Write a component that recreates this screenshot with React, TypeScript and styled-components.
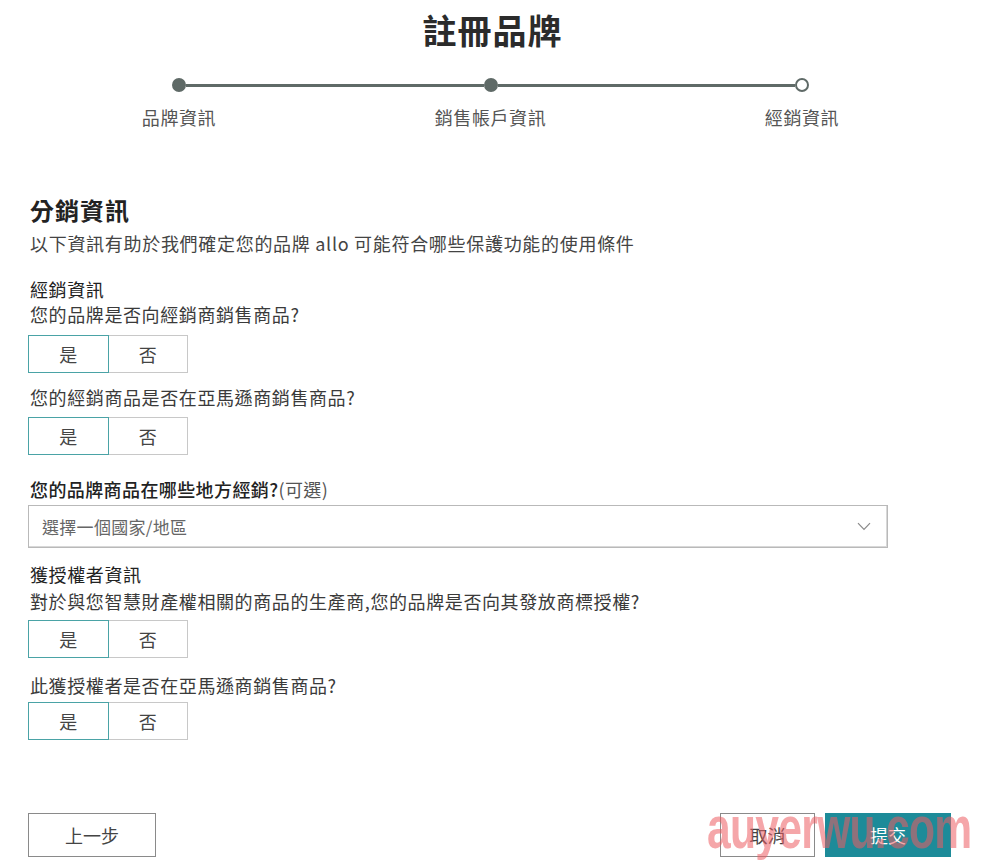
import React, { useState } from "react";
import styled, { createGlobalStyle } from "styled-components";

const GlobalStyle = createGlobalStyle`
  html, body { margin: 0; padding: 0; background: #fff; }
  body {
    font-family: "Noto Sans CJK TC", "Noto Sans", sans-serif;
    color: #333;
    -webkit-font-smoothing: antialiased;
  }
  * { box-sizing: border-box; }
`;

const Page = styled.div`
  position: relative;
  width: 985px;
  height: 862px;
  overflow: hidden;
  padding-top: 8px;
`;

const Title = styled.h1`
  margin: 0;
  text-align: center;
  font-size: 34px;
  line-height: 44px;
  font-weight: 700;
  color: #2b2b2b;
  letter-spacing: 1px;
`;

const Stepper = styled.div`
  display: flex;
  margin: 26px 0 0 172px;
  width: 637px;
`;

const Step = styled.div`
  width: 14px;
  display: flex;
  flex-direction: column;
  align-items: center;
`;

const Dot = styled.div<{ $done: boolean }>`
  width: 14px;
  height: 14px;
  border-radius: 50%;
  background: ${(p) => (p.$done ? "#5f6a67" : "#fff")};
  border: 2px solid #5f6a67;
  flex: none;
`;

const StepLabel = styled.div`
  margin-top: 13px;
  white-space: nowrap;
  font-size: 18px;
  letter-spacing: 0.6px;
  line-height: 24px;
  color: #555;
`;

const Connector = styled.div`
  flex: 1;
  height: 3px;
  margin-top: 5.5px;
  background: #5f6a67;
`;

const Form = styled.div`
  margin: 66px 0 0 28px;
  width: 860px;
  display: flex;
  flex-direction: column;
`;

const SectionTitle = styled.h2`
  margin: 0 0 0 2px;
  font-size: 24px;
  letter-spacing: 1px;
  line-height: 30px;
  font-weight: 700;
  color: #222;
`;

const Subtitle = styled.p`
  margin: 6px 0 0 2px;
  font-size: 18px;
  letter-spacing: 0.7px;
  line-height: 24px;
  color: #444;
`;

const GroupTitle = styled.div<{ $mt: number }>`
  margin: ${(p) => p.$mt}px 0 0 2px;
  font-size: 18px;
  letter-spacing: 0.6px;
  line-height: 24px;
  color: #222;
`;

const Question = styled.div<{ $mt: number }>`
  margin: ${(p) => p.$mt}px 0 0 2px;
  font-size: 18px;
  letter-spacing: 0.6px;
  line-height: 24px;
  color: #3a3a3a;
`;

const FieldLabel = styled.div`
  margin: 22px 0 0 2px;
  font-size: 18px;
  letter-spacing: 0.4px;
  line-height: 24px;
  font-weight: 500;
  color: #222;
`;

const Optional = styled.span`
  font-weight: 400;
  color: #555;
`;

const Toggle = styled.div<{ $mt: number }>`
  margin-top: ${(p) => p.$mt}px;
  display: flex;
  width: 160px;
  height: 38px;
`;

const ToggleBtn = styled.button<{ $active: boolean; $side: "l" | "r" }>`
  width: 81px;
  height: 38px;
  padding: 0;
  background: #fff;
  font-family: inherit;
  font-size: 18px;
  color: #444;
  cursor: pointer;
  border: 1px solid ${(p) => (p.$active ? "#4aa3a6" : "#c8c8c8")};
  ${(p) => (p.$active ? "border-width: 1.5px;" : "")}
  ${(p) => (p.$side === "r" ? "margin-left: -1px;" : "")}
  position: relative;
  z-index: ${(p) => (p.$active ? 1 : 0)};
`;

const Select = styled.div`
  margin-top: 4px;
  height: 43px;
  border: 1px solid #b9b9b9;
  box-shadow: inset -1px -1px 0 #d8d8d8;
  display: flex;
  align-items: center;
  justify-content: space-between;
  padding: 0 16px 0 13px;
  font-size: 17px;
  letter-spacing: 0.3px;
  color: #666;
`;

const Footer = styled.div`
  margin: 73px 34px 0 28px;
  display: flex;
  justify-content: space-between;
  align-items: center;
`;

const Actions = styled.div`
  display: flex;
  gap: 10px;
`;

const Button = styled.button<{ $w: number; $primary?: boolean }>`
  width: ${(p) => p.$w}px;
  height: 44px;
  font-family: inherit;
  font-size: 18px;
  background: ${(p) => (p.$primary ? "#1d8b99" : "#fff")};
  color: ${(p) => (p.$primary ? "#fff" : "#444")};
  border: 1px solid ${(p) => (p.$primary ? "#1d8b99" : "#8a8a8a")};
  cursor: pointer;
`;

const Watermark = styled.div`
  position: absolute;
  left: 707px;
  top: 793px;
  font-family: "Liberation Sans", Arial, sans-serif;
  font-weight: 700;
  font-size: 60px;
  line-height: 70px;
  color: rgba(236, 92, 98, 0.55);
  transform: scaleX(0.71);
  transform-origin: left top;
  pointer-events: none;
  letter-spacing: -1px;
  white-space: nowrap;
`;

const Chevron = () => (
  <svg width="14" height="9" viewBox="0 0 14 9" fill="none">
    <path d="M1 1.2 L7 7.5 L13 1.2" stroke="#8a8a8a" strokeWidth="1.2" />
  </svg>
);

type YN = "yes" | "no";

const YesNo: React.FC<{ mt: number; value: YN; onChange: (v: YN) => void }> = ({
  mt,
  value,
  onChange,
}) => (
  <Toggle $mt={mt}>
    <ToggleBtn $side="l" $active={value === "yes"} onClick={() => onChange("yes")}>
      是
    </ToggleBtn>
    <ToggleBtn $side="r" $active={value === "no"} onClick={() => onChange("no")}>
      否
    </ToggleBtn>
  </Toggle>
);

const steps = [
  { label: "品牌資訊", done: true },
  { label: "銷售帳戶資訊", done: true },
  { label: "經銷資訊", done: false },
];

export default function App() {
  const [a, setA] = useState<YN>("yes");
  const [b, setB] = useState<YN>("yes");
  const [c, setC] = useState<YN>("yes");
  const [d, setD] = useState<YN>("yes");

  return (
    <Page>
      <GlobalStyle />
      <Title>註冊品牌</Title>
      <Stepper>
        {steps.map((s, i) => (
          <React.Fragment key={s.label}>
            {i > 0 && <Connector />}
            <Step>
              <Dot $done={s.done} />
              <StepLabel>{s.label}</StepLabel>
            </Step>
          </React.Fragment>
        ))}
      </Stepper>

      <Form>
        <SectionTitle>分銷資訊</SectionTitle>
        <Subtitle>以下資訊有助於我們確定您的品牌 allo 可能符合哪些保護功能的使用條件</Subtitle>

        <GroupTitle $mt={22}>經銷資訊</GroupTitle>
        <Question $mt={1}>您的品牌是否向經銷商銷售商品?</Question>
        <YesNo mt={9} value={a} onChange={setA} />
        <Question $mt={12}>您的經銷商品是否在亞馬遜商銷售商品?</Question>
        <YesNo mt={8} value={b} onChange={setB} />

        <FieldLabel>
          您的品牌商品在哪些地方經銷?<Optional>(可選)</Optional>
        </FieldLabel>
        <Select>
          <span>選擇一個國家/地區</span>
          <Chevron />
        </Select>

        <GroupTitle $mt={14}>獲授權者資訊</GroupTitle>
        <Question $mt={3}>對於與您智慧財產權相關的商品的生產商,您的品牌是否向其發放商標授權?</Question>
        <YesNo mt={7} value={c} onChange={setC} />
        <Question $mt={15}>此獲授權者是否在亞馬遜商銷售商品?</Question>
        <YesNo mt={5} value={d} onChange={setD} />
      </Form>

      <Footer>
        <Button $w={128}>上一步</Button>
        <Actions>
          <Button $w={95}>取消</Button>
          <Button $w={126} $primary>
            提交
          </Button>
        </Actions>
      </Footer>

      <Watermark>auyerwu.com</Watermark>
    </Page>
  );
}
